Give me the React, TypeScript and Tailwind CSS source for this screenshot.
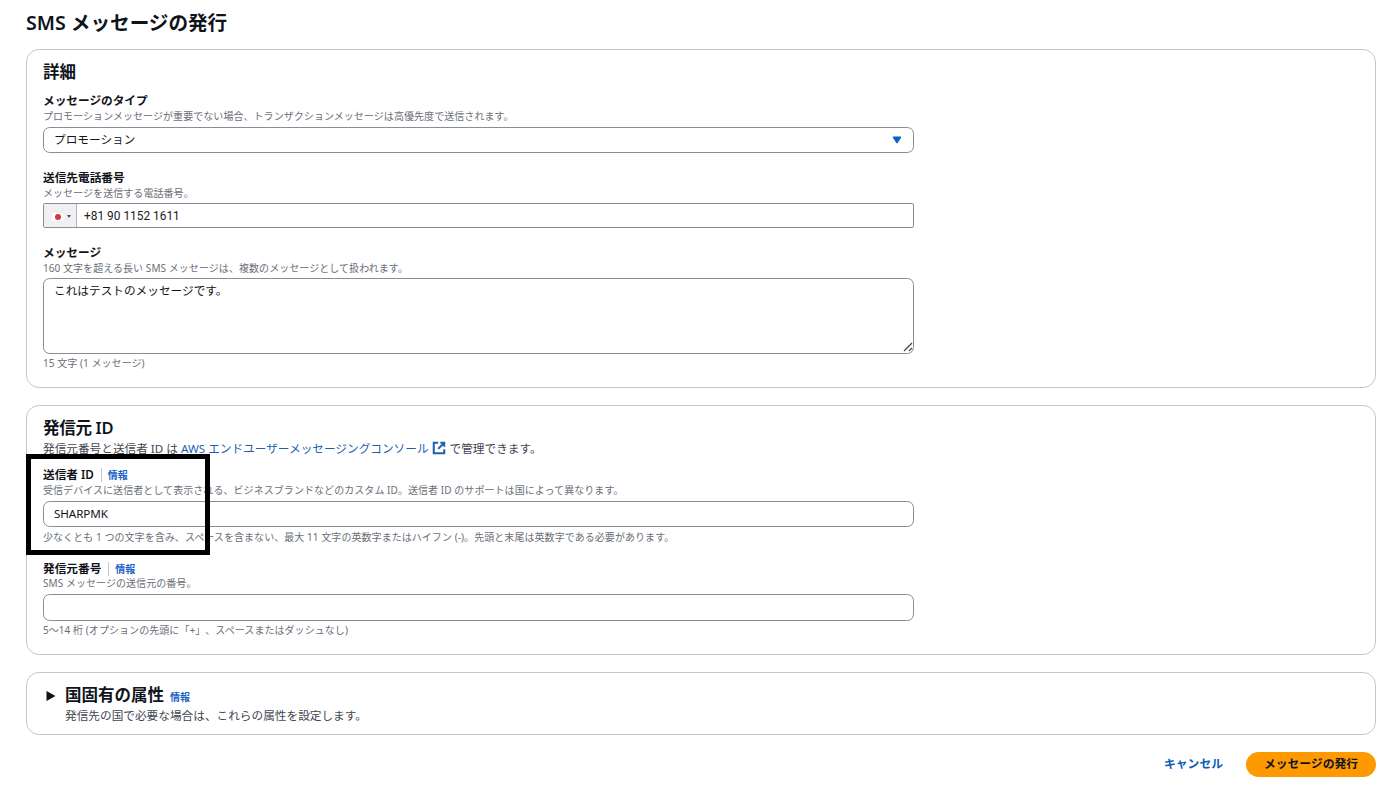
import React, { useState } from 'react';

interface FieldLabelProps {
  text: string;
  info?: boolean;
}

const FieldLabel: React.FC<FieldLabelProps> = ({ text, info }) => (
  <div className="flex h-4 items-center whitespace-nowrap text-[11.67px] leading-4 font-semibold text-[#0f141a]">
    <span>{text}</span>
    {info && (
      <a href="#" className="ml-[7px] flex h-[14px] items-center border-l border-[#c6c6cd] pl-[6px] text-[10px] leading-4 text-[#1b62c4]">
        情報
      </a>
    )}
  </div>
);

const Hint: React.FC<{ children: React.ReactNode }> = ({ children }) => (
  <p className="h-[15px] text-[10px] leading-[15px] tracking-[0.06px] whitespace-nowrap text-[#6b6e77]">{children}</p>
);

const ExternalIcon = () => (
  <svg viewBox="0 0 16 16" className="mr-0.5 ml-[3px] inline-block h-[14px] w-[14px] align-[-2px]" fill="none" stroke="currentColor" strokeWidth="2.3">
    <path d="M7 2H2v12h12V9.500" />
    <path d="M9.500 2H14v4.500M7 9l6.500-6.500" />
  </svg>
);

const inputClass =
  'block w-[871px] rounded-[6.67px] border border-[#8c8c94] bg-white px-2.5 text-[11.67px] text-[#0f141a] outline-none';

export default function App() {
  const [message, setMessage] = useState('これはテストのメッセージです。');
  const [phone, setPhone] = useState('+81 90 1152 1611');
  const [senderId, setSenderId] = useState('SHARPMK');
  const [origin, setOrigin] = useState('');

  return (
    <main className="h-[796px] w-[1392px] overflow-hidden bg-white pr-4 pl-[26px] font-['Noto_Sans','Noto_Sans_CJK_JP',sans-serif] text-[#0f141a] [text-spacing-trim:space-all]">
      <h1 className="h-9 pt-[9px] text-[19.6px] leading-7 font-semibold whitespace-nowrap">SMS メッセージの発行</h1>

      <section className="mt-[13px] h-[339px] rounded-[13px] border border-[#c6c6cd] px-4 pt-[11px]">
        <h2 className="text-[16.5px] leading-[22px] font-semibold">詳細</h2>

        <div className="mt-[10px]">
          <FieldLabel text="メッセージのタイプ" />
          <Hint>プロモーションメッセージが重要でない場合、トランザクションメッセージは高優先度で送信されます。</Hint>
          <button className={`${inputClass} mt-[3px] flex! h-[26px] items-center justify-between`}>
            <span>プロモーション</span>
            <svg viewBox="0 0 10 8" className="mr-[1px] h-2 w-2.5" fill="#0b63c4">
              <path d="M1 1h8L5.200 7H4.800z" stroke="#0b63c4" strokeLinejoin="round" />
            </svg>
          </button>
        </div>

        <div className="mt-[17px]">
          <FieldLabel text="送信先電話番号" />
          <Hint>メッセージを送信する電話番号。</Hint>
          <div className="mt-[2px] flex h-[25px] w-[871px] rounded-[2px] border border-[#8c8c94]">
            <div className="flex w-[33px] items-center border-r border-[#b4b4bb] bg-[#f0f0f4] pt-[2px] pl-2">
              <span className="flex h-2 w-[11px] items-center justify-center bg-white">
                <span className="h-[6px] w-[6px] rounded-full bg-[#d0393e]" />
              </span>
              <svg viewBox="0 0 4 3" className="ml-1 h-[3px] w-1" fill="#555">
                <path d="M0 0h4L2 3z" />
              </svg>
            </div>
            <input
              value={phone}
              onChange={(e) => setPhone(e.target.value)}
              className="flex-1 bg-transparent pt-[2px] pl-[7px] font-['Roboto',sans-serif] text-[11.9px] text-[#222] outline-none"
            />
          </div>
        </div>

        <div className="mt-[17px]">
          <FieldLabel text="メッセージ" />
          <Hint>160 文字を超える長い SMS メッセージは、複数のメッセージとして扱われます。</Hint>
          <div className="relative mt-[2px] w-[871px]">
            <textarea
              value={message}
              onChange={(e) => setMessage(e.target.value)}
              className={`${inputClass} h-[76px] resize-none pt-[3px] leading-[18px]`}
            />
            <svg viewBox="0 0 10 10" className="absolute right-[1px] bottom-[2px] h-2.5 w-2.5" stroke="#4a4a4a" strokeWidth="1.3">
              <path d="M1 9l8-8M6 9l3-3" />
            </svg>
          </div>
          <div className="mt-[2px]">
            <Hint>15 文字 (1 メッセージ)</Hint>
          </div>
        </div>
      </section>

      <section className="relative mt-[17px] h-[250px] rounded-[13px] border border-[#c6c6cd] px-4 pt-[11px]">
        <h2 className="text-[16.5px] leading-[22px] font-semibold tracking-[-0.3px]">発信元 ID</h2>
        <p className="mt-[1px] h-[17px] text-[11.67px] leading-[17px] tracking-[-0.01px] whitespace-nowrap text-[#424650]">
          発信元番号と送信者 ID は{' '}
          <a href="#" className="text-[#1b5fae]">
            AWS エンドユーザーメッセージングコンソール
            <ExternalIcon />
          </a>
          <span className="ml-[2px]">で管理できます。</span>
        </p>

        <div className="mt-[10px]">
          <FieldLabel text="送信者 ID" info />
          <Hint>受信デバイスに送信者として表示される、ビジネスブランドなどのカスタム ID。送信者 ID のサポートは国によって異なります。</Hint>
          <input value={senderId} onChange={(e) => setSenderId(e.target.value)} className={`${inputClass} mt-[3px] h-[26px] pb-[2px] tracking-[-0.1px]`} />
          <div className="mt-[3px]">
            <Hint>少なくとも 1 つの文字を含み、スペースを含まない、最大 11 文字の英数字またはハイフン (-)。先頭と末尾は英数字である必要があります。</Hint>
          </div>
        </div>

        <div className="mt-4">
          <FieldLabel text="発信元番号" info />
          <div className="-mt-px">
            <Hint>SMS メッセージの送信元の番号。</Hint>
          </div>
          <input value={origin} onChange={(e) => setOrigin(e.target.value)} className={`${inputClass} mt-[3px] h-[27px]`} />
          <div className="mt-[2px]">
            <Hint>5〜14 桁 (オプションの先頭に「+」、スペースまたはダッシュなし)</Hint>
          </div>
        </div>

        {/* highlight around the sender ID */}
        <div className="pointer-events-none absolute top-[48px] -left-px h-[101px] w-[184px] border-5 border-black" />
      </section>

      <section className="mt-[17px] flex h-[63px] rounded-[13px] border border-[#c6c6cd] pt-[11px] pl-[19px]">
        <svg viewBox="0 0 10 12" className="mt-[6px] h-3 w-2.5" fill="#0f141a">
          <path d="M.5 1v10L9.500 6z" />
        </svg>
        <div className="ml-[9px] whitespace-nowrap">
          <h2 className="flex h-[23px] items-baseline text-[16.5px] leading-[22px] font-semibold">
            国固有の属性
            <a href="#" className="ml-[6px] text-[10px] text-[#1b62c4]">
              情報
            </a>
          </h2>
          <p className="text-[11.67px] leading-[18px] text-[#424650]">発信先の国で必要な場合は、これらの属性を設定します。</p>
        </div>
      </section>

      <div className="mt-[17px] flex h-[25px] items-center justify-end text-[11.8px] font-semibold">
        <button className="mr-[23px] pb-[2px] text-[#0a5cb8]">キャンセル</button>
        <button className="h-[25px] w-[130px] rounded-full bg-[#ff9900] pb-[2px] text-[#0f141a]">メッセージの発行</button>
      </div>
    </main>
  );
}
